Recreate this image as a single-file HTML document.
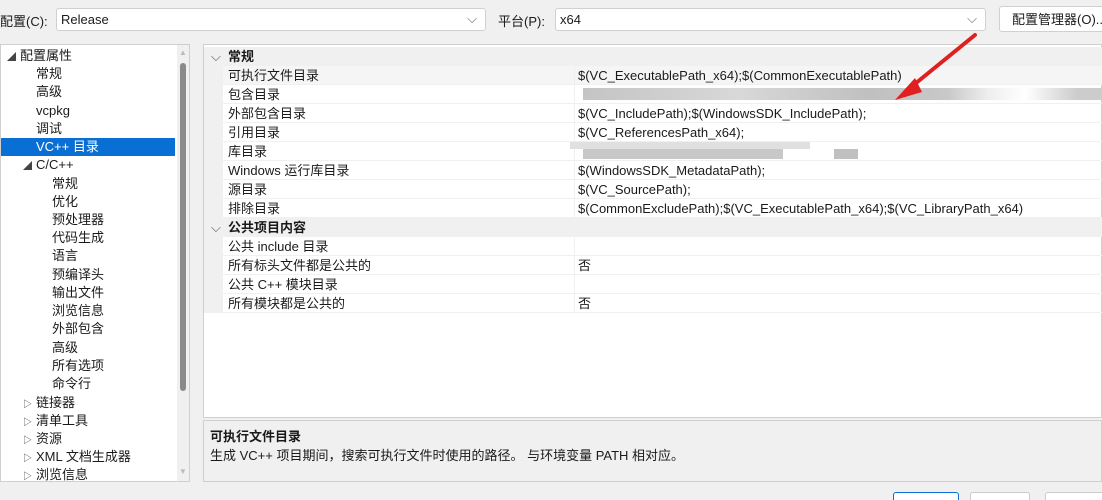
<!DOCTYPE html><html><head><meta charset="utf-8"><style>
*{margin:0;padding:0;box-sizing:border-box}
html,body{width:1102px;height:500px;overflow:hidden}
body{background:#f0f0f0;font-family:"Liberation Sans","Noto Sans CJK SC",sans-serif;font-size:13px;color:#1a1a1a;position:relative}
.a{position:absolute;white-space:nowrap}
.combo{position:absolute;background:#fff;border:1px solid #d0d0d0;border-radius:3px;height:23px;padding:3px 0 0 4px;line-height:16px}
.tree{position:absolute;left:0;top:44px;width:190px;height:438px;background:#fff;border:1px solid #cfcfcf}
.ti{position:absolute;left:0;height:18px;line-height:18px;width:174px}
.ar{font-size:9px;color:#444;display:inline-block;width:13px}
.grid{position:absolute;left:203px;top:44px;width:899px;height:374px;background:#fff;border:1px solid #cfcfcf}
.r{position:absolute;left:0;width:899px;height:19px;line-height:19px;border-bottom:1px solid #f0f0f0}
.r .n{position:absolute;left:24px}
.r .v{position:absolute;left:370px;border-left:1px solid #f0f0f0;padding-left:3px;height:19px}
.h{background:#f0f0f0;font-weight:bold}
.g{position:absolute;left:0;top:0;width:19px;height:19px;background:#f0f0f0}
.blur{position:absolute;height:12px;background:#c8c8c8}
</style></head><body>
<div class="a" style="left:0;top:11px">配置(C):</div>
<div class="combo" style="left:56px;top:8px;width:430px">Release<span class="a" style="right:8px;top:2px;color:#666">⌵</span></div>
<div class="a" style="left:498px;top:11px">平台(P):</div>
<div class="combo" style="left:555px;top:8px;width:431px">x64<span class="a" style="right:8px;top:2px;color:#666">⌵</span></div>
<div class="combo" style="left:999px;top:6px;width:110px;height:26px;padding:5px 0 0 12px">配置管理器(O)...</div>

<div class="tree">
<div class="ti" style="top:2px;left:6px"><span class="ar">◢</span>配置属性</div>
<div class="ti" style="top:20px;left:35px">常规</div>
<div class="ti" style="top:38px;left:35px">高级</div>
<div class="ti" style="top:57px;left:35px">vcpkg</div>
<div class="ti" style="top:75px;left:35px">调试</div>
<div class="ti" style="top:93px;background:#0a6fd4;color:#fff;padding-left:35px">VC++ 目录</div>
<div class="ti" style="top:111px;left:22px"><span class="ar">◢</span>C/C++</div>
<div class="ti" style="top:130px;left:51px">常规</div>
<div class="ti" style="top:148px;left:51px">优化</div>
<div class="ti" style="top:166px;left:51px">预处理器</div>
<div class="ti" style="top:184px;left:51px">代码生成</div>
<div class="ti" style="top:202px;left:51px">语言</div>
<div class="ti" style="top:221px;left:51px">预编译头</div>
<div class="ti" style="top:239px;left:51px">输出文件</div>
<div class="ti" style="top:257px;left:51px">浏览信息</div>
<div class="ti" style="top:275px;left:51px">外部包含</div>
<div class="ti" style="top:294px;left:51px">高级</div>
<div class="ti" style="top:312px;left:51px">所有选项</div>
<div class="ti" style="top:330px;left:51px">命令行</div>
<div class="ti" style="top:349px;left:22px"><span class="ar">▷</span>链接器</div>
<div class="ti" style="top:367px;left:22px"><span class="ar">▷</span>清单工具</div>
<div class="ti" style="top:385px;left:22px"><span class="ar">▷</span>资源</div>
<div class="ti" style="top:403px;left:22px"><span class="ar">▷</span>XML 文档生成器</div>
<div class="ti" style="top:421px;left:22px"><span class="ar">▷</span>浏览信息</div>
<div class="a" style="left:176px;top:0;width:12px;height:436px;background:#f0f0f0"></div>
<div class="a" style="left:179px;top:18px;width:6px;height:328px;background:#8a8a8a;border-radius:3px"></div>
<div class="a" style="left:178px;top:3px;font-size:8px;color:#bbb">▲</div>
<div class="a" style="left:178px;top:422px;font-size:8px;color:#bbb">▼</div>
</div>

<div class="grid">
<div class="r h" style="top:2px"><span class="a" style="left:7px;font-weight:normal;color:#555">⌵</span><span class="n">常规</span></div>
<div class="r" style="top:21px;background:#f5f5f5"><div class="g"></div><span class="n">可执行文件目录</span><span class="v">$(VC_ExecutablePath_x64);$(CommonExecutablePath)</span></div>
<div class="r" style="top:40px"><div class="g"></div><span class="n">包含目录</span><span class="v"></span></div>
<div class="r" style="top:59px"><div class="g"></div><span class="n">外部包含目录</span><span class="v">$(VC_IncludePath);$(WindowsSDK_IncludePath);</span></div>
<div class="r" style="top:78px"><div class="g"></div><span class="n">引用目录</span><span class="v">$(VC_ReferencesPath_x64);</span></div>
<div class="r" style="top:97px"><div class="g"></div><span class="n">库目录</span><span class="v"></span></div>
<div class="r" style="top:116px"><div class="g"></div><span class="n">Windows 运行库目录</span><span class="v">$(WindowsSDK_MetadataPath);</span></div>
<div class="r" style="top:135px"><div class="g"></div><span class="n">源目录</span><span class="v">$(VC_SourcePath);</span></div>
<div class="r" style="top:154px"><div class="g"></div><span class="n">排除目录</span><span class="v">$(CommonExcludePath);$(VC_ExecutablePath_x64);$(VC_LibraryPath_x64)</span></div>
<div class="r h" style="top:173px"><span class="a" style="left:7px;font-weight:normal;color:#555">⌵</span><span class="n">公共项目内容</span></div>
<div class="r" style="top:192px"><div class="g"></div><span class="n">公共 include 目录</span><span class="v"></span></div>
<div class="r" style="top:211px"><div class="g"></div><span class="n">所有标头文件都是公共的</span><span class="v">否</span></div>
<div class="r" style="top:230px"><div class="g"></div><span class="n">公共 C++ 模块目录</span><span class="v"></span></div>
<div class="r" style="top:249px"><div class="g"></div><span class="n">所有模块都是公共的</span><span class="v">否</span></div>
<div class="blur" style="left:379px;top:43px;width:520px;background:linear-gradient(90deg,#c4c4c4,#d8d8d8 30%,#c0c0c0 55%,#c8c8c8 70%,#eee 78%,#fff 85%,#ccc 95%)"></div>
<div class="blur" style="left:366px;top:97px;width:240px;height:7px;background:#e0e0e0"></div>
<div class="blur" style="left:379px;top:104px;width:200px;height:10px;background:#c8c8c8"></div>
<div class="blur" style="left:630px;top:104px;width:24px;height:10px;background:#c0c0c0"></div>
</div>

<div class="a" style="left:203px;top:420px;width:899px;height:62px;border:1px solid #cfcfcf;background:#f0f0f0">
<div class="a" style="left:6px;top:5px;font-weight:bold">可执行文件目录</div>
<div class="a" style="left:6px;top:24px">生成 VC++ 项目期间，搜索可执行文件时使用的路径。 与环境变量 PATH 相对应。</div>
</div>
<div class="a" style="left:893px;top:492px;width:66px;height:8px;border:1px solid #0a6fd4;border-bottom:0;border-radius:3px 3px 0 0;background:#fff"></div>
<div class="a" style="left:970px;top:492px;width:60px;height:8px;border:1px solid #ccc;border-bottom:0;border-radius:3px 3px 0 0;background:#fff"></div>
<div class="a" style="left:1045px;top:492px;width:60px;height:8px;border:1px solid #ccc;border-bottom:0;border-radius:3px 3px 0 0;background:#fff"></div>

<svg class="a" style="left:0;top:0" width="1102" height="500"><line x1="975" y1="35" x2="905" y2="92" stroke="#e02020" stroke-width="4" stroke-linecap="round"/><polygon points="895,100 915,78 922,92" fill="#e02020"/></svg>
</body></html>
